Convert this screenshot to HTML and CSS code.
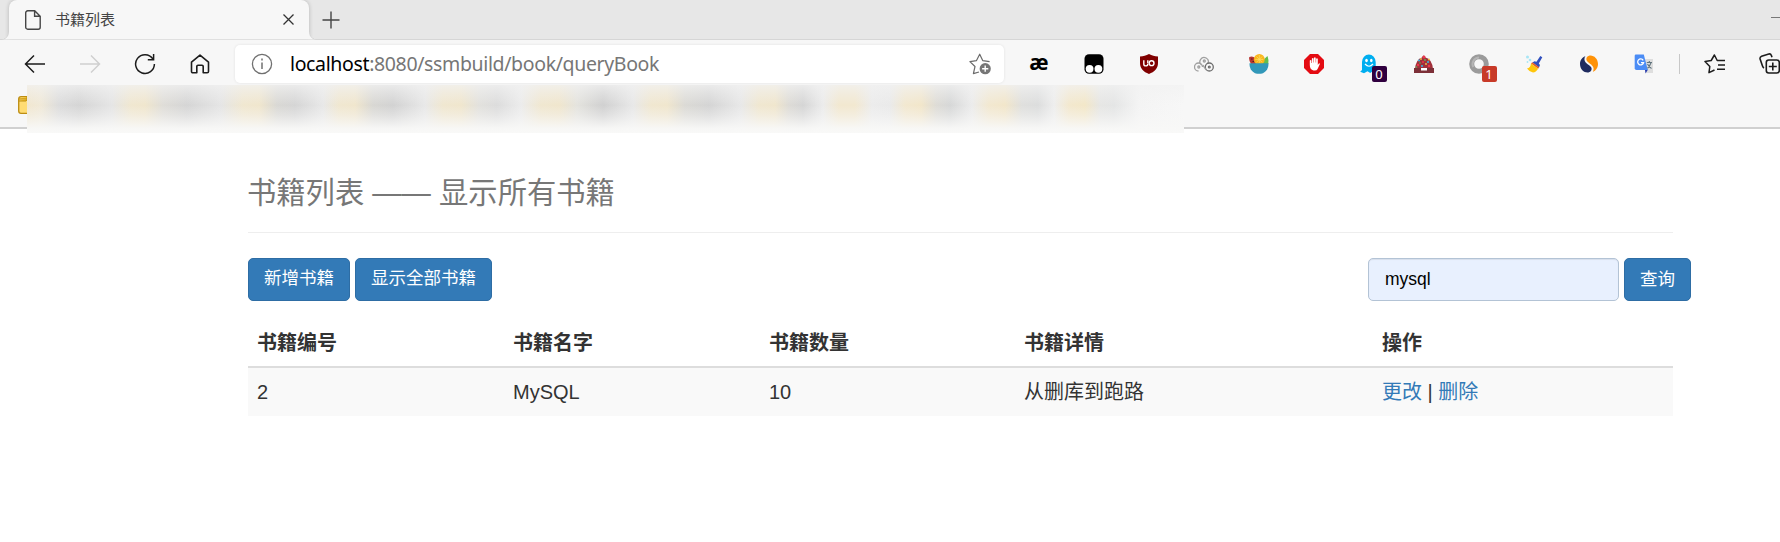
FILE: index.html
```html
<!DOCTYPE html>
<html lang="zh-CN">
<head>
<meta charset="utf-8">
<title>书籍列表</title>
<link rel="stylesheet" href="styles.css">
</head>
<body>
<header class="browser">
  <div class="tabstrip">
    <div class="tab">
      <svg class="page-icon" width="16" height="20" viewBox="0 0 16 20" fill="none" stroke="#454545" stroke-width="1.4"><path d="M2.7.8h7L15.200 6.200V17.200a2 2 0 0 1-2 2H2.700a2 2 0 0 1-2-2V2.800a2 2 0 0 1 2-2zM9.600 1v5.300h5.400"/></svg>
      <span class="tab-title">书籍列表</span>
      <svg class="close" width="11" height="11" viewBox="0 0 11 11" stroke="#333" stroke-width="1.3"><path d="M.5.5l10 10M10.500.5l-10 10"/></svg>
    </div>
    <svg class="plus" width="18" height="18" viewBox="0 0 18 18" stroke="#444" stroke-width="1.4"><path d="M9 .5v17M.5 9h17"/></svg>
    <span class="minimize"></span>
  </div>
  <div class="toolbar">
    <nav class="nav">
      <span><svg width="22" height="20" viewBox="0 0 22 20" fill="none" stroke="#1c1c1c" stroke-width="1.5"><path d="M21 10H1.500M10 1.500L1.500 10l8.500 8.500"/></svg></span>
      <span><svg width="22" height="20" viewBox="0 0 22 20" fill="none" stroke="#cfcfcf" stroke-width="1.500"><path d="M1 10h19.500M12 1.500L20.500 10 12 18.500"/></svg></span>
      <span><svg width="22" height="22" viewBox="0 0 22 22" fill="none" stroke="#1c1c1c" stroke-width="1.500"><path d="M18.800 5.800A9.400 9.400 0 1 0 20.400 11M19.600 1v5.800h-5.800"/></svg></span>
      <span><svg width="20" height="20" viewBox="0 0 20 20" fill="none" stroke="#1c1c1c" stroke-width="1.600" stroke-linejoin="round"><path d="M1.500 8.200L10 1.200l8.500 7v9.300a1.300 1.300 0 0 1-1.300 1.300h-4V12.500a1.200 1.200 0 0 0-1.200-1.200H8a1.200 1.200 0 0 0-1.200 1.200v6.300h-4a1.300 1.300 0 0 1-1.300-1.300z"/></svg></span>
    </nav>
    <div class="address">
      <svg width="22" height="22" viewBox="0 0 22 22" fill="none" stroke="#707070" stroke-width="1.300"><circle cx="11" cy="11" r="9.600"/><path d="M11 9.500v6.500M11 5.500v2" stroke-width="1.500"/></svg>
      <span class="url"><b>localhost</b>:8080/ssmbuild/book/queryBook</span>
      <svg class="fav" width="24" height="24" viewBox="0 0 24 24"><path d="M10 19l-5.600 1.600L6 13.500.900 8.600l6.600-1L10.700 1.200l3 6.400 6.900 1" fill="none" stroke="#6b6b6b" stroke-width="1.200" stroke-linejoin="round"/><circle cx="16.200" cy="15.700" r="5.600" fill="#767676"/><path d="M16.200 12.600v6.200M13.100 15.700h6.200" stroke="#fff" stroke-width="1.400"/></svg>
    </div>
    <div class="extensions">
      <span class="ext"><i class="ae">æ</i></span>
      <span class="ext"><svg width="20" height="20" viewBox="0 0 20 20"><rect x=".5" y=".3" width="19" height="19.400" rx="4.500"/><circle cx="5.600" cy="14.800" r="3.900" fill="#fff"/><circle cx="14.400" cy="14.800" r="3.900" fill="#fff"/></svg></span>
      <span class="ext"><svg width="18" height="20" viewBox="0 0 18 20"><path d="M9 0c3 1.700 5.500 2.300 9 2.600V9c0 5.500-3.500 8.800-9 11C3.500 17.800 0 14.500 0 9V2.600C3.500 2.300 6 1.700 9 0z" fill="#800000"/><path d="M3.800 6.300v3.600a2 2 0 0 0 4 0M7.800 6.300v3.300" fill="none" stroke="#fff" stroke-width="1.400"/><circle cx="11.600" cy="9.200" r="2.400" fill="none" stroke="#fff" stroke-width="1.400"/></svg></span>
      <span class="ext"><svg width="20" height="16" viewBox="0 0 20 16" fill="none" stroke="#a0a0a0" stroke-width="1.300"><path d="M7.500 9A4.200 4.200 0 1 1 14 7.400M4.500 15a4 4 0 1 1 4-4"/><circle cx="15.300" cy="11" r="4" stroke="#6e6e6e"/><circle cx="10.300" cy="5" r="1"/><circle cx="4.800" cy="11" r="1"/><circle cx="15.300" cy="11" r=".9" stroke="#6e6e6e"/><path d="M9 9.200l3 4.600"/></svg></span>
      <span class="ext"><svg width="20" height="20" viewBox="0 0 20 20"><path d="M.3 3Q6 .5 10 10H2Q-.5 6 .3 3z" fill="#b93632"/><path d="M13 7l5.500-5Q20 6 19.300 10H12z" fill="#62bd4e"/><circle cx="10.300" cy="5.400" r="5.400" fill="#f9b61c"/><path d="M10.300 1v8M6.300 5.400h8M7.500 2.500l5.600 5.800M13.100 2.500L7.500 8.300" stroke="#ffe06a" stroke-width=".7"/><path d="M2 5h1.500M3.500 7.500H5" stroke="#4a2222"/><path d="M.500 9.300h19C19.500 14 18 17 14 19.200Q10 20.500 6 19.200C2 17 .5 14 .5 9.300z" fill="#3298b9"/></svg></span>
      <span class="ext"><svg width="20" height="20" viewBox="0 0 20 20"><path d="M6 0h8l6 6v8l-6 6H6l-6-6V6z" fill="#e40b12"/><path d="M5.800 11V6.500q.9-1 1.600 0V9h.5V4.500q.9-1 1.700 0V8.500h.4V3.700q.9-1 1.700 0v4.800h.4V4.800q.9-1 1.700 0V11l1-1.500q1-.5 1.100.5l-2.300 5q-.8 1.500-2.700 1.500H9.500q-3.700-.8-3.700-5.500z" fill="#fff"/></svg></span>
      <span class="ext"><svg width="20" height="20" viewBox="0 0 20 20"><path d="M3 8a6.800 7.500 0 0 1 13.700 0v11l-3-1.800-2.500 1.800-2.700-1.800L5 19.300l-3.800-1.500L3 16z" fill="#00aef0"/><ellipse cx="7.500" cy="6.500" rx="1.300" ry="1.800" fill="#fff"/><ellipse cx="12.300" cy="6.500" rx="1.300" ry="1.800" fill="#fff"/><path d="M6 10q4 4.500 8 0" fill="none" stroke="#fff" stroke-width="1.200"/></svg><em class="badge dark">0</em></span>
      <span class="ext"><svg width="22" height="20" viewBox="0 0 22 20"><path d="M2 15Q3 5 9 3.500 10.500-.5 12.500 3.500 19 5 20 15z" fill="#a1303b"/><path d="M1 14h20v5H1z" fill="#7d3038"/><path d="M8 14h6v2.500H8z" fill="#fff"/><g fill="#36bce8"><circle cx="6" cy="6.500" r="1"/><circle cx="15" cy="8" r="1"/><circle cx="9" cy="12" r="1"/></g><g fill="#ed394b"><circle cx="11" cy="3" r="1.500"/><circle cx="5" cy="11" r="1.200"/><circle cx="16" cy="12" r="1.200"/><circle cx="10" cy="8" r="1"/></g><g fill="#f2c646"><circle cx="8" cy="5" r=".9"/><circle cx="13" cy="10" r=".9"/><circle cx="16" cy="5.500" r=".9"/></g><g fill="#57b65a"><circle cx="12" cy="6" r=".9"/><circle cx="7" cy="9" r=".8"/><circle cx="3.500" cy="13" r=".8"/></g></svg></span>
      <span class="ext"><svg width="20" height="20" viewBox="0 0 20 20" fill="none"><circle cx="10" cy="10" r="7.300" stroke="#9b9b9b" stroke-width="5"/><path d="M4.300 13A6.500 6.500 0 0 1 10 3.500" stroke="#b5b5b5" stroke-width="2"/></svg><em class="badge red">1</em></span>
      <span class="ext"><svg width="18" height="18" viewBox="0 0 18 18"><path d="M15.300 1l2 1.300-3.500 6.200 1.200 1.500-1 2.500-6.500-5 2-1.300 2 .5z" fill="#3150be"/><path d="M7.300 7.300l6.800 5-1 1.500L6 8.600z" fill="#e86225"/><path d="M6 8.600l7.100 5.200Q11 17.500 8 17.500 4.500 17 2 13.500q3.500-.5 4-4.900z" fill="#ffc60b"/><g fill="#a7e6f5"><circle cx="2.500" cy="2" r="1.500"/><circle cx="5" cy="5" r="1.300"/><circle cx="2.500" cy="7" r=".9"/></g></svg></span>
      <span class="ext"><svg width="20" height="18" viewBox="0 0 20 18"><path d="M6.500 1C2.500 2.500 1 6 1 9c0 5 3.800 8.500 7.500 8.500 3 0 4.500-2.300 4-4.500C12 10.500 6 8.500 5.500 5 5.300 3.500 5.700 2 6.500 1z" fill="#1f2b5f"/><path d="M13.800 17C17.500 15.500 19 12 19 9 19 4 15.200.5 11.500.5 8.500.5 7 2.800 7.500 5 8 7.500 14 9.500 14.500 13c.2 1.500-.1 3-.7 4z" fill="#ff9207"/></svg></span>
      <span class="ext"><svg width="20" height="20" viewBox="0 0 20 20"><path d="M9 5h10v14H12z" fill="#dedede"/><path d="M11 16l3-.5-2.500 4z" fill="#2639ad"/><path d="M1.500.500h8.300L13.800 16H2.500Q.7 16 .7 14.300V2Q.7.500 1.500.5z" fill="#4b8cf5"/><path d="M9.200 6.300A3 3 0 1 0 9.600 8.700H7" fill="none" stroke="#fff" stroke-width="1.300"/><path d="M12.800 8.500h5.200M15.300 7v1.500M17 8.700q-1.500 4-3.500 5.500M13.500 10q2 3.500 4 4.500" fill="none" stroke="#61747e" stroke-width="1.100"/></svg></span>
    </div>
    <span class="separator"></span>
    <svg class="favorites" width="22" height="20" viewBox="0 0 22 20" fill="none" stroke="#1c1c1c" stroke-width="1.500" stroke-linejoin="round"><path d="M10.500 16L5 18.700l.8-6.200L1 7.500l6.200-1L10.400 1l2.800 5.500H21M14 11h7M13 15.300h8"/></svg>
    <svg class="collections" width="22" height="21" viewBox="0 0 22 21" fill="none" stroke="#1c1c1c" stroke-width="1.600"><rect x="7.300" y="7" width="13" height="13" rx="2.500"/><path d="M13.800 9.500v8M9.800 13.500h8M5 15Q4 14.500 3.500 13L1.100 6Q.7 4 2.600 3.200L9.800 1Q11.700.6 12.400 2.500l.6 1.700"/></svg>
  </div>
  <div class="bookmarks">
    <svg class="folder" width="14" height="18" viewBox="0 0 14 18"><path d="M.7 3Q.700.700 3 .7h11v16.600H3Q.7 17.300.7 15z" fill="#ffdc73" stroke="#bd8d12" stroke-width="1.300"/><path d="M1 3h8V1M1 5h7l1.500-2" fill="#f2bd21" stroke="#bd8d12"/></svg>
    <div class="smudge"></div>
  </div>
</header>
<main class="container">
  <h1 class="page-header">书籍列表 —— 显示所有书籍</h1>
  <div class="actions">
    <a class="btn">新增书籍</a>
    <a class="btn">显示全部书籍</a>
    <form class="search">
      <input class="field" type="text" value="mysql">
      <button class="btn" type="button">查询</button>
    </form>
  </div>
  <table class="books">
    <colgroup><col class="c1"><col class="c2"><col class="c3"><col class="c4"><col class="c5"></colgroup>
    <thead><tr><th>书籍编号</th><th>书籍名字</th><th>书籍数量</th><th>书籍详情</th><th>操作</th></tr></thead>
    <tbody><tr><td>2</td><td>MySQL</td><td>10</td><td>从删库到跑路</td><td><a>更改</a> | <a>删除</a></td></tr></tbody>
  </table>
</main>
</body>
</html>
```

FILE: styles.css
```css
* { box-sizing: border-box; }
body {
  margin: 0;
  width: 1780px;
  height: 542px;
  overflow: hidden;
  background: #fff;
  color: #333;
  font-family: "Liberation Sans", "Noto Sans CJK SC", sans-serif;
}
svg { display: block; flex: none; }

/* Browser chrome */
.browser { height: 129px; background: #f7f7f7; border-bottom: 2px solid #d0d0d0; }
.tabstrip {
  display: flex;
  align-items: center;
  height: 40px;
  padding-left: 9px;
  background: #e7e7e7;
  border-bottom: 1px solid #d6d6d6;
}
.tab {
  position: relative;
  display: flex;
  align-items: center;
  width: 300px;
  height: 40px;
  padding: 0 15px 0 16px;
  background: #f7f7f7;
  border-radius: 8px 8px 0 0;
  box-shadow: 0 0 4px rgba(0, 0, 0, .22);
  clip-path: inset(0 -8px 0 -9px);
}
.tab::before, .tab::after {
  content: "";
  position: absolute;
  bottom: 0;
  width: 8px;
  height: 8px;
}
.tab::before { left: -8px; background: radial-gradient(circle at 0 0, transparent 7px, #d6d6d6 7.5px, #f7f7f7 8.500px); }
.tab::after { right: -8px; background: radial-gradient(circle at 100% 0, transparent 7px, #d6d6d6 7.5px, #f7f7f7 8.500px); }
.tab-title { flex: 1; margin: -1px 0 0 14px; font: 15px/20px "Noto Sans CJK SC", sans-serif; color: #444; }
.plus { margin-left: 13px; }
.minimize { width: 9px; height: 1px; margin: 0 0 5px auto; background: #777; }

.toolbar { display: flex; align-items: center; height: 45px; padding-top: 2px; }
.toolbar > * { flex: none; }
.nav { display: flex; width: 235px; padding-left: 7.500px; }
.nav span { display: flex; justify-content: center; align-items: center; width: 55px; }
.address {
  display: flex;
  align-items: center;
  width: 769px;
  height: 38px;
  padding: 0 11px 0 16px;
  background: #fff;
  border-radius: 5px;
  box-shadow: 0 0 3px rgba(0, 0, 0, .09);
}
.fav { margin-top: 2px; }
.url { flex: 1; margin: 1px 0 0 17px; font: 19.500px/28px "Noto Sans", sans-serif; letter-spacing: -.36px; color: #767676; white-space: nowrap; }
.url b { font-weight: 400; color: #000; }
.extensions { display: flex; padding-left: 7.500px; }
.ext { position: relative; display: flex; justify-content: center; align-items: center; width: 55px; height: 24px; }
.ae { margin-top: -4px; font: 700 21px/20px "Noto Sans", sans-serif; color: #000; }
.badge {
  position: absolute;
  left: 30px;
  top: 14px;
  width: 15px;
  height: 16px;
  border-radius: 2px;
  color: #fff;
  font: 13px/16px "Noto Sans", sans-serif;
  text-align: center;
}
.badge.dark { background: #30003f; }
.badge.red { background: #c83a28; }
.separator { width: 1px; height: 20px; margin-left: 7.500px; background: #c8c8c8; }
.favorites { margin-left: 24px; }
.collections { margin-left: 33px; }

.bookmarks { display: flex; height: 42px; padding-left: 18px; }
.folder { margin-top: 11px; width: 14px; margin-right: -5px; }
.smudge {
  position: relative;
  width: 1157px;
  height: 48px;
  flex: none;
  background:
    linear-gradient(to bottom, rgba(242,242,242,.75) 0, rgba(242,242,242,.4) 18%, rgba(247,247,247,0) 42%, rgba(247,247,247,.35) 62%, rgba(248,248,247,.95) 90%, #f9f9f8 100%),
    linear-gradient(to right,
      #f1e7d0 0, #f0e9d8 14px, #dcdcdc 32px, #d5d5d5 52px, #e5e5e5 85px,
      #f0e7d0 104px, #f0e6cd 118px, #dfddd8 136px, #d5d5d5 160px, #e5e5e5 194px,
      #f0e7d0 216px, #f0e6cd 232px, #d9d8d4 250px, #d5d5d5 268px, #e8e8e8 296px,
      #f0e7d0 312px, #f0e6cd 328px, #d8d7d3 346px, #d2d2d2 366px, #e8e8e8 398px,
      #f0e7d0 416px, #f0e6cd 434px, #e2e1dd 452px, #dcdcdc 470px, #ececec 494px,
      #f0e7d0 514px, #f0e6cd 532px, #e4e3de 550px, #d0d0d0 576px, #e8e8e8 606px,
      #f0e7d0 624px, #f0e6cd 640px, #dbdad5 658px, #d4d4d4 682px, #e8e8e8 714px,
      #f0e7d0 732px, #f0e6cd 748px, #dddbd6 762px, #d5d5d5 776px, #ececec 796px,
      #f2e8d0 812px, #f2e8d0 828px, #ececec 845px, #eaeaea 863px,
      #f2e8d0 878px, #f2e6ca 894px, #dedcd6 909px, #d6d7d7 923px, #ececec 945px,
      #f2e8d0 962px, #f2e6ca 978px, #dfdfdd 995px, #dcdddd 1011px, #eeeeee 1027px,
      #f3e8ce 1042px, #f3e7c8 1058px, #e6e6e4 1073px, #e4e5e5 1087px, #f4f4f4 1112px, #f7f7f7 1157px);
}

/* Page content */
.container { width: 1425px; margin-left: 248px; }
.page-header {
  height: 104px;
  margin: 0;
  padding-top: 41px;
  border-bottom: 1px solid #eee;
  font-size: 29.300px;
  line-height: 46px;
  font-weight: 400;
  text-indent: -1px;
  color: #777;
  white-space: nowrap;
}
.actions { display: flex; gap: 5px; margin: 25px -18px 0 0; height: 43px; }
.btn {
  height: 43px;
  padding: 0 15px;
  border: 1px solid #2e6da4;
  border-radius: 5px;
  background: #337ab7;
  color: #fff;
  font: 17.500px/39px "Liberation Sans", "Noto Sans CJK SC", sans-serif;
  white-space: nowrap;
}
.search { display: flex; gap: 5px; margin-left: auto; }
.field {
  width: 251px;
  height: 43px;
  padding: 0 16px;
  border: 1px solid #b3c3d5;
  border-radius: 5px;
  background: #e8f0fe;
  box-shadow: inset 0 1px 1px rgba(0, 0, 0, .075);
  color: #000;
  font: 17.500px "Liberation Sans", sans-serif;
}
.books {
  width: 1425px;
  margin-top: 17px;
  border-collapse: separate;
  border-spacing: 0;
  table-layout: fixed;
  font-size: 20px;
  line-height: 28px;
}
.c1, .c2 { width: 256px; }
.c3 { width: 255px; }
.c4 { width: 358px; }
.books th, .books td { padding: 0 9px; text-align: left; white-space: nowrap; }
.books th { height: 50px; padding-top: 2px; border-bottom: 2px solid #ddd; }
.books td { height: 48px; background: #f9f9f9; }
.books td a { color: #337ab7; }
```
